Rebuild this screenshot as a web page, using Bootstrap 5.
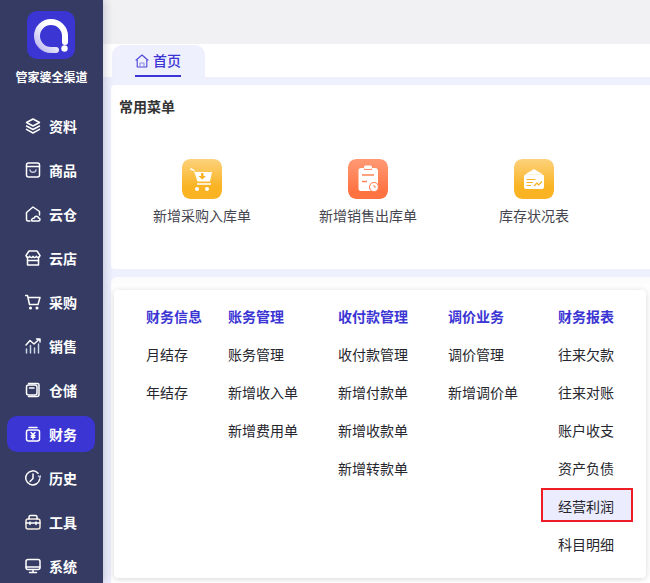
<!DOCTYPE html>
<html lang="zh-CN">
<head>
    <meta charset="UTF-8">
    <meta name="viewport" content="width=device-width, initial-scale=1.0">
    <title>管家婆全渠道</title>
    <link href="https://cdn.jsdelivr.net/npm/bootstrap@5.3.0/dist/css/bootstrap.min.css" rel="stylesheet">
    <style>
        html, body { height: 583px; overflow: hidden; }
        body { font-family: "Noto Sans CJK SC", "Liberation Sans", sans-serif; font-size: 14px; color: #26262e; background: #fff; }
        .side { width: 103px; height: 583px; background: #353b63; color: #fff; box-shadow: 2px 0 8px rgba(40, 44, 90, .22); position: relative; z-index: 2; }
        .side-logo { width: 48px; height: 48px; margin: 11px 0 0 27px; border-radius: 10px; background: #3b35d4; }
        .side-title { font-size: 12px; font-weight: 700; line-height: 16px; margin-top: 10px; text-align: center; }
        .side-menu { margin-top: 23px; }
        .side-item { height: 36px; margin: 0 8px 8px 7px; padding-left: 18px; gap: 8px; border-radius: 10px; font-weight: 700; line-height: 36px; }
        .side-item.on { background: #3b35d4; }
        .side-item svg { width: 16px; height: 16px; flex: none; fill: none; stroke: #fff; stroke-width: 1.5; stroke-linejoin: round; stroke-linecap: round; }
        .top-bar { height: 44px; background: #f1f1f3; box-shadow: 0 3px 6px rgba(225, 225, 230, .8); }
        .tab-row { height: 33px; padding: 1px 0 0 9px; }
        .home-tab { width: 93px; height: 32px; padding-left: 23px; background: #eff0fe; border-radius: 10px 10px 0 0; color: #3b35d4; font-weight: 500; }
        .home-tab span { border-bottom: 2px solid #3b35d4; display: flex; gap: 4px; align-items: center; height: 32px; padding-top: 1px; width: 46px; }
        .home-tab svg { width: 14px; height: 14px; flex: none; }
        .work-area { background: #eff0fe; padding: 8px 0 0 8px; height: 506px; }
        .quick-panel { height: 184px; background: #fff; border-radius: 4px 0 0 4px; padding: 13px 0 0 8px; }
        .quick-head { font-weight: 700; font-size: 14px; line-height: 17px; color: #333; }
        .quick-list { margin-top: 44px; }
        .quick-item { width: 166px; text-align: center; color: #45454f; }
        .quick-icon { width: 40px; height: 40px; margin: 0 auto 7px; border-radius: 8px; display: block; }
        .quick-text { line-height: 18px; }
        .menu-panel { margin-top: 8px; height: 306px; background: linear-gradient(#fbfbfd, #fff 13px); border-radius: 6px 0 0 0; padding: 13px 4px 5px 3px; }
        .menu-card { height: 288px; background: #fff; border-radius: 4px; box-shadow: 0 1px 6px rgba(0, 0, 0, .16); padding: 7px 0 0 32px; gap: 40px; }
        .menu-col:first-child { margin-right: -14px; }
        .menu-row { height: 38px; line-height: 38px; white-space: nowrap; color: #26262e; }
        .menu-row.head { color: #3b35d4; font-weight: 700; }
        .menu-row.pick { position: relative; }
        .menu-row.pick::before { content: ""; position: absolute; left: -17px; right: -19px; top: 1px; bottom: 3px; background: #ebecfd; border: 2px solid #ee1c25; z-index: 0; }
        .menu-row.pick b { position: relative; font-weight: 400; }
    </style>
</head>
<body class="d-flex">
    <aside class="side">
        <div class="side-logo">
            <svg width="48" height="48" viewBox="0 0 48 48">
                <defs>
                    <linearGradient id="logoRing" x1="0" y1="1" x2="1" y2="0">
                        <stop offset="0" stop-color="#b9b6ee"/>
                        <stop offset=".6" stop-color="#fff"/>
                    </linearGradient>
                </defs>
                <path d="M38 31V25A14 14 0 1 0 24 39H29" fill="none" stroke="url(#logoRing)" stroke-width="6" stroke-linecap="round"/>
                <circle cx="37.500" cy="37.500" r="3.200" fill="#fff"/>
            </svg>
        </div>
        <div class="side-title">管家婆全渠道</div>
        <div class="side-menu">
            <div class="side-item d-flex align-items-center">
                <svg viewBox="0 0 16 16"><path d="M8 1 14.500 4.500 8 8 1.500 4.500Z"/><path d="M1.500 8 8 11.500 14.500 8"/><path d="M1.500 11.300 8 15 14.500 11.300"/></svg>资料
            </div>
            <div class="side-item d-flex align-items-center">
                <svg viewBox="0 0 16 16"><rect x="1.500" y="1" width="13" height="14" rx="2"/><path d="M1.500 4.500H14.500"/><path d="M5 8C5.500 11 10.500 11 11 8" stroke="#c9cbe0"/></svg>商品
            </div>
            <div class="side-item d-flex align-items-center">
                <svg viewBox="0 0 16 16"><path d="M5 15H3Q1.500 15 1.500 13.500V6.500L8 1 14.500 5.500V9"/><path d="M7 15H13.500C15.500 15 15.500 12 13.500 12 13 9.500 9.500 9.500 9.500 12 7 11.700 6 14.500 7 15Z"/></svg>云仓
            </div>
            <div class="side-item d-flex align-items-center">
                <svg viewBox="0 0 16 16"><path d="M2.500 7V15H13.500V7"/><path d="M4 1H12L15 5.500C14.500 8 12 8 11.300 6.300 10.500 8 9 8 8 6.300 7 8 5.500 8 4.700 6.300 4 8 1.500 8 1 5.500Z"/><path d="M2.500 10.500H13.500"/></svg>云店
            </div>
            <div class="side-item d-flex align-items-center">
                <svg viewBox="0 0 16 16"><path d="M.5 1.500H2.500L4.500 10.500H13L15 3.500H3"/><circle cx="5.500" cy="14" r=".8"/><circle cx="12" cy="14" r=".8"/></svg>采购
            </div>
            <div class="side-item d-flex align-items-center">
                <svg viewBox="0 0 16 16"><path d="M1 7 5 2.500 9 6 14.500 1M11.500 1H15V4"/><path d="M1.500 15V11M5.500 15V7.500M9.500 15V10M13.500 15V6" stroke="#c9d6e6" stroke-width="1.500"/></svg>销售
            </div>
            <div class="side-item d-flex align-items-center">
                <svg viewBox="0 0 16 16"><path d="M3.500 1.500H12.500Q14 1.500 14 3V12.500Q14 14.500 12 14.500H3.500"/><rect x="1.500" y="3" width="10.500" height="10" rx="2"/><path d="M4.500 6H9"/></svg>仓储
            </div>
            <div class="side-item on d-flex align-items-center">
                <svg viewBox="0 0 16 16"><rect x="1.500" y="4" width="13" height="11" rx="2"/><path d="M4 1.500H12"/><path d="M6 6.500 8 8.500 10 6.500M8 8.500V13M6.200 9.500H9.800M6.200 11.300H9.800"/></svg>财务
            </div>
            <div class="side-item d-flex align-items-center">
                <svg viewBox="0 0 16 16"><path d="M14.700 9A7 7 0 1 1 13 3.200"/><path d="M8 4V8.500L5 11.500"/><path d="M13.500 6 15 7.500 15.500 6" stroke="#c9cbe0"/></svg>历史
            </div>
            <div class="side-item d-flex align-items-center">
                <svg viewBox="0 0 16 16"><rect x="1" y="5" width="14" height="10" rx="2" stroke="#f3e9dc"/><path d="M4 5V3Q4 1.500 5.500 1.500H10.500Q12 1.500 12 3V5"/><path d="M1 9H15M5 8V10.500M11 8V10.500"/></svg>工具
            </div>
            <div class="side-item d-flex align-items-center">
                <svg viewBox="0 0 16 16"><rect x="1" y="1.500" width="14" height="10" rx="2"/><path d="M1 9H15M8 11.500V14.500M4.500 14.500H11.500"/></svg>系统
            </div>
        </div>
    </aside>

    <main class="flex-grow-1">
        <div class="top-bar"></div>
        <div class="tab-row bg-white">
            <div class="home-tab d-flex">
                <span>
                    <svg viewBox="0 0 14 14" fill="none" stroke="#4c46d8" stroke-width="1.100" stroke-linejoin="round"><path d="M.7 6.500 7 1 13.300 6.500"/><path d="M2.200 6V13H11.800V6"/><path d="M5 13V9H9V13" stroke="#8f8be6"/></svg>首页
                </span>
            </div>
        </div>
        <div class="work-area">
            <section class="quick-panel">
                <div class="quick-head">常用菜单</div>
                <div class="quick-list d-flex">
                    <div class="quick-item">
                        <svg class="quick-icon" viewBox="0 0 40 40">
                            <defs>
                                <linearGradient id="gradYellow" x1="0" y1="0" x2="0" y2="1"><stop offset="0" stop-color="#fdd27c"/><stop offset=".7" stop-color="#f9b323"/></linearGradient>
                                <linearGradient id="gradOrange" x1="0" y1="0" x2="0" y2="1"><stop offset="0" stop-color="#ff9a75"/><stop offset=".8" stop-color="#ff7342"/></linearGradient>
                            </defs>
                            <rect width="40" height="40" rx="8" fill="url(#gradYellow)"/>
                            <path d="M8.500 9 12 10.500 13 13H30L28 22.500H15.500L12 12 8 10.500Z" fill="#fff"/>
                            <path d="M19 14H21.500V17H24L20.200 20.500 16.500 17H19Z" fill="#f9b323"/>
                            <path d="M15 25H29" stroke="#fff" stroke-width="1.500"/>
                            <circle cx="15" cy="30" r="2" fill="#fff"/><circle cx="25" cy="30" r="2" fill="#fff"/>
                        </svg>
                        <div class="quick-text">新增采购入库单</div>
                    </div>
                    <div class="quick-item">
                        <svg class="quick-icon" viewBox="0 0 40 40">
                            <rect width="40" height="40" rx="8" fill="url(#gradOrange)"/>
                            <path d="M13 9H16V11H24V9H27Q30 9 30 12V26L25 32H13Q10.500 32 10.500 29.500V11.500Q10.500 9 13 9Z" fill="#fff"/>
                            <rect x="16" y="6.500" width="8" height="3.500" rx="1.500" fill="#fff"/>
                            <path d="M14 16H26M14 22.500H19" stroke="#ff8558" stroke-width="1.500"/>
                            <circle cx="26" cy="28" r="4.500" fill="#fff" stroke="#ff8558" stroke-width="1.200"/>
                            <path d="M26 26V28H28" fill="none" stroke="#ff8558"/>
                        </svg>
                        <div class="quick-text">新增销售出库单</div>
                    </div>
                    <div class="quick-item">
                        <svg class="quick-icon" viewBox="0 0 40 40">
                            <rect width="40" height="40" rx="8" fill="url(#gradYellow)"/>
                            <path d="M20 10 29 15.500H11Z" fill="#fff"/>
                            <rect x="10" y="15.500" width="20" height="14.500" rx="2" fill="#fff"/>
                            <path d="M12.500 20.500H21.500M12.500 23.500H19M12.500 26.500H17" stroke="#f9b323" stroke-width="1.200"/>
                            <path d="M20 27 23 24 24.500 26 28 22.500" fill="none" stroke="#f9b323" stroke-width="1.200"/>
                        </svg>
                        <div class="quick-text">库存状况表</div>
                    </div>
                </div>
            </section>
            <section class="menu-panel">
                <div class="menu-card d-flex">
                    <div class="menu-col">
                        <div class="menu-row head">财务信息</div>
                        <div class="menu-row">月结存</div>
                        <div class="menu-row">年结存</div>
                    </div>
                    <div class="menu-col">
                        <div class="menu-row head">账务管理</div>
                        <div class="menu-row">账务管理</div>
                        <div class="menu-row">新增收入单</div>
                        <div class="menu-row">新增费用单</div>
                    </div>
                    <div class="menu-col">
                        <div class="menu-row head">收付款管理</div>
                        <div class="menu-row">收付款管理</div>
                        <div class="menu-row">新增付款单</div>
                        <div class="menu-row">新增收款单</div>
                        <div class="menu-row">新增转款单</div>
                    </div>
                    <div class="menu-col">
                        <div class="menu-row head">调价业务</div>
                        <div class="menu-row">调价管理</div>
                        <div class="menu-row">新增调价单</div>
                    </div>
                    <div class="menu-col">
                        <div class="menu-row head">财务报表</div>
                        <div class="menu-row">往来欠款</div>
                        <div class="menu-row">往来对账</div>
                        <div class="menu-row">账户收支</div>
                        <div class="menu-row">资产负债</div>
                        <div class="menu-row pick"><b>经营利润</b></div>
                        <div class="menu-row">科目明细</div>
                    </div>
                </div>
            </section>
        </div>
    </main>
    <script src="https://cdn.jsdelivr.net/npm/bootstrap@5.3.0/dist/js/bootstrap.bundle.min.js"></script>
</body>
</html>
